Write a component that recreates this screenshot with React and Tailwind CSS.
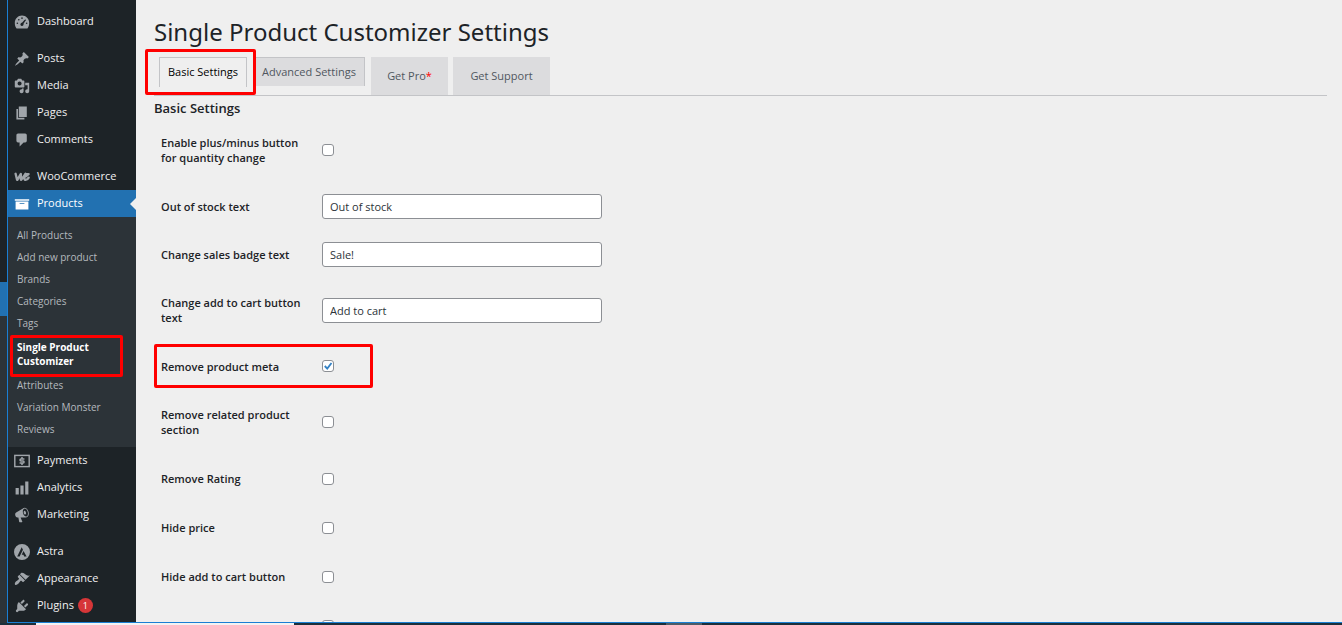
import { useState } from "react";
import clsx from "clsx";

function MenuIcon({ children }) {
  return (
    <svg viewBox="0 0 20 20" fill="currentColor" aria-hidden="true" className="size-4 shrink-0">
      {children}
    </svg>
  );
}

const icons = {
  dashboard: (
    <path
      fillRule="evenodd"
      d="M3.2 18h13.6C18.3 16.300 19 13.8 19 11.200c0-5-4-9.200-9-9.200s-9 4.200-9 9.200c0 2.600.7 5.100 2.200 6.800zM9 5.200a1 1 0 1 0 2 0 1 1 0 1 0-2 0zM5 7.200a1 1 0 1 0 2 0 1 1 0 1 0-2 0zM13.100 7.600c.4-.5 1.300-.9 1.700-.5.4.4-.2 1.200-.7 1.600l-2.200 3.500c.4 1.500-.5 2.800-1.900 2.800-1.900 0-2.700-2.300-1.300-3.500.4-.3.8-.5 1.300-.5zM3.200 11.500a1 1 0 1 0 2 0 1 1 0 1 0-2 0zM14.800 11.500a1 1 0 1 0 2 0 1 1 0 1 0-2 0z"
    />
  ),
  posts: (
    <path d="M10.44 3.02l1.82-1.82 6.36 6.35-1.83 1.82c-1.05-.68-2.48-.57-3.41.36l-.75.75c-.92.93-1.04 2.35-.35 3.41l-1.83 1.82-2.41-2.41-2.8 2.79c-.42.42-3.38 2.71-3.8 2.29s1.86-3.39 2.28-3.81l2.79-2.79L4.1 9.36l1.83-1.82c1.05.69 2.48.57 3.4-.36l.75-.75c.93-.92 1.05-2.35.36-3.41z" />
  ),
  media: (
    <path d="M13 11V4c0-.55-.45-1-1-1h-1.67L9 1H5L3.67 3H2c-.55 0-1 .45-1 1v7c0 .55.45 1 1 1h10c.55 0 1-.45 1-1zM7 4.5c1.38 0 2.5 1.12 2.5 2.5S8.38 9.5 7 9.5 4.5 8.38 4.5 7 5.62 4.5 7 4.5zM14 6h5v10.5c0 1.38-1.12 2.5-2.5 2.5S14 17.88 14 16.5s1.12-2.5 2.5-2.5c.17 0 .34.02.5.05V9h-3V6zm-4 8.05V13h2v3.5c0 1.38-1.12 2.5-2.5 2.5S7 17.88 7 16.5 8.12 14 9.5 14c.17 0 .34.02.5.05z" />
  ),
  pages: <path d="M6 15V2h10v13H6zm-1 1h8v2H3V5h2v11z" />,
  comments: (
    <path d="M5 2h9c1.1 0 2 .9 2 2v7c0 1.1-.9 2-2 2h-2l-5 5v-5H5c-1.1 0-2-.9-2-2V4c0-1.1.9-2 2-2z" />
  ),
  woo: (
    <path
      d="M2 6L3.800 13.500H4.200L8.600 6.200V13.500H9L14.300 6C12.600 9.500 12.300 13.600 14.600 13.600C16.200 13.600 17.500 12.300 18.300 10.800M14.800 9.200L18.200 6.300H14.600"
      fill="none"
      stroke="currentColor"
      strokeWidth="2.900"
      strokeLinejoin="round"
      strokeLinecap="round"
    />
  ),
  products: <path d="M19 4v2H1V4h18zM2 7h16v10H2V7zm11 3V9H7v1h6z" />,
  payments: (
    <g fill="none" stroke="currentColor">
      <rect x="1" y="3" width="18" height="14" strokeWidth="1.800" />
      <path d="M13 7.500H8.700C7.100 7.500 7.100 10 8.700 10h2.600c1.700 0 1.700 2.500 0 2.500H7M10 5v2.500M10 12.500V15" strokeWidth="1.900" />
    </g>
  ),
  analytics: <path d="M18 18V2h-4v16h4zm-6 0V7H8v11h4zm-6 0v-8H2v8h4z" />,
  marketing: (
    <path d="M18.150 5.940c.46 1.620.38 3.220-.02 4.480-.42 1.280-1.260 2.180-2.300 2.480-.16.06-.26.06-.4.06-.06.02-.12.02-.18.02-.06.02-.14.02-.22.02h-6.800l2.220 5.500c.02.14-.06.26-.14.34-.08.1-.24.16-.34.16H6.950c-.1 0-.26-.06-.34-.16-.08-.08-.16-.2-.14-.34l-1-5.500H4.250l-.02-.02c-.5.06-1.080-.18-1.540-.62s-.88-1.080-1.060-1.880c-.24-.8-.2-1.560-.02-2.200.18-.62.58-1.080 1.060-1.300l.02-.02 9-5.400c.1-.06.18-.1.24-.16.06-.04.14-.08.24-.12.16-.08.28-.12.5-.18 1.040-.3 2.240.1 3.220.98s1.840 2.240 2.260 3.860zm-2.580 5.980h-.02c.4-.1.74-.34 1.040-.7.58-.7.86-1.760.86-3.040 0-.64-.1-1.300-.28-1.980-.34-1.360-1.020-2.500-1.780-3.240s-1.680-1.100-2.460-.88c-.82.22-1.400.96-1.700 2-.32 1.040-.28 2.360.06 3.720.38 1.360 1 2.500 1.800 3.240.78.74 1.620 1.100 2.480.88zm-2.540-7.080c.22-.04.42-.02.62.04.38.16.76.48 1.020 1s.42 1.200.42 1.780c0 .3-.04.56-.12.8-.18.48-.44.84-.86.94-.34.1-.8-.06-1.140-.4s-.64-.86-.78-1.500c-.18-.62-.12-1.240.02-1.720s.48-.84.82-.94z" />
  ),
  astra: (
    <path
      fillRule="evenodd"
      d="M10 0a10 10 0 1 0 0 20 10 10 0 0 0 0-20zM9.600 4.200L11.200 7.300L7 15.500H4zM11.900 8.600L15.800 15.500H12.700L11.800 13.400H9.600z"
    />
  ),
  appearance: (
    <path d="M14.480 11.060L7.410 3.990l1.500-1.500c.5-.56 2.300-.47 3.510.32 1.210.8 1.430 1.280 2.910 2.100 1.180.64 2.450 1.260 4.450.85zm-.71.71L6.700 4.700 4.930 6.470c-.39.39-.39 1.020 0 1.410l1.060 1.060c.39.39.39 1.030 0 1.420-.6.6-1.430 1.110-2.210 1.690-.35.26-.7.53-1.010.84C1.430 14.230.4 16.080 1.400 17.070c.99 1 2.840-.03 4.180-1.360.31-.31.58-.66.85-1.020.57-.78 1.080-1.610 1.690-2.210.39-.39 1.020-.39 1.410 0l1.060 1.060c.39.39 1.020.39 1.410 0z" />
  ),
  plugins: (
    <path d="M13.110 4.360L9.870 7.600 8 5.730l3.240-3.240c.35-.34 1.050-.2 1.560.32.52.51.66 1.210.31 1.550zm-8 1.770l.91-1.120 9.010 9.010-1.190.84c-.71.71-2.630 1.160-3.820 1.160H6.140L4.900 17.260c-.59.59-1.540.59-2.120 0-.59-.58-.59-1.530 0-2.120l1.240-1.240v-3.880c0-1.130.4-3.190 1.090-3.890zm7.260 3.970l3.240-3.240c.34-.35 1.040-.21 1.550.31.52.51.66 1.210.31 1.550l-3.240 3.250z" />
  ),
};

const menuGroups = [
  [{ icon: "dashboard", label: "Dashboard" }],
  [
    { icon: "posts", label: "Posts" },
    { icon: "media", label: "Media" },
    { icon: "pages", label: "Pages" },
    { icon: "comments", label: "Comments" },
  ],
  [
    { icon: "woo", label: "WooCommerce" },
    {
      icon: "products",
      label: "Products",
      children: [
        "All Products",
        "Add new product",
        "Brands",
        "Categories",
        "Tags",
        "Single Product Customizer",
        "Attributes",
        "Variation Monster",
        "Reviews",
      ],
    },
    { icon: "payments", label: "Payments" },
    { icon: "analytics", label: "Analytics" },
    { icon: "marketing", label: "Marketing" },
  ],
  [
    { icon: "astra", label: "Astra" },
    { icon: "appearance", label: "Appearance" },
    { icon: "plugins", label: "Plugins", badge: 1 },
  ],
];

const settings = [
  { id: "plus_minus", label: "Enable plus/minus button for quantity change", tall: true, value: false },
  { id: "stock_text", label: "Out of stock text", value: "Out of stock" },
  { id: "sale_text", label: "Change sales badge text", value: "Sale!" },
  { id: "cart_text", label: "Change add to cart button text", tall: true, value: "Add to cart" },
  { id: "remove_meta", label: "Remove product meta", value: true, marked: true },
  { id: "remove_related", label: "Remove related product section", tall: true, value: false },
  { id: "remove_rating", label: "Remove Rating", value: false },
  { id: "hide_price", label: "Hide price", value: false },
  { id: "hide_cart", label: "Hide add to cart button", value: false },
  { id: "hide_sku", label: "", value: false },
];

function rowHeight(setting) {
  if (setting.tall) return "h-16";
  return typeof setting.value === "string" || setting.marked ? "h-12" : "h-[49px]";
}

function Highlight({ className }) {
  return (
    <span className={clsx("pointer-events-none absolute z-10 rounded-xs border-3 border-[#ff0000]", className)} />
  );
}

function SubMenu({ items }) {
  return (
    <ul className="bg-[#2c3338] py-[7px]">
      {items.map((item) => {
        const current = item === "Single Product Customizer";
        return (
          <li key={item} className="relative">
            <a
              href="#"
              className={clsx(
                "block pr-6 pl-[9px] text-[10px] leading-[14px]",
                current ? "py-1.5 font-bold text-white" : "py-1 text-[#b4b9be]"
              )}
            >
              {item}
            </a>
            {current && <Highlight className="top-px left-0.5 h-[42px] w-[113px]" />}
          </li>
        );
      })}
    </ul>
  );
}

function Sidebar() {
  return (
    <nav className="flex w-32 shrink-0 flex-col gap-2.5 overflow-hidden bg-[#1d2327] pt-2">
      {menuGroups.map((group, i) => (
        <ul key={i}>
          {group.map((item) => (
            <li key={item.label}>
              <a
                href="#"
                className={clsx(
                  "relative flex h-[27px] items-center pl-1.5 text-[11px]",
                  item.children ? "bg-[#2271b1] text-white" : "text-[#f0f0f1]"
                )}
              >
                <span className={clsx("mr-[7px]", item.children ? "text-white" : "text-[#a0a5aa]")}>
                  <MenuIcon>{icons[item.icon]}</MenuIcon>
                </span>
                {item.label}
                {item.badge && (
                  <span className="ml-1 flex size-[15px] items-center justify-center rounded-full bg-[#d63638] text-[9px] text-white">
                    {item.badge}
                  </span>
                )}
                {item.children && (
                  <span className="absolute right-0 border-y-6 border-r-6 border-y-transparent border-r-[#efefef]" />
                )}
              </a>
              {item.children && <SubMenu items={item.children} />}
            </li>
          ))}
        </ul>
      ))}
    </nav>
  );
}

function Tabs() {
  return (
    <div className="relative mr-[15px] ml-[18px] flex h-[39px] items-start border-b border-[#c3c4c7] pl-[5px] text-[11px] font-medium text-[#50575e]">
      <button type="button" className="h-[30px] w-[88px] border border-b-0 border-[#c3c4c7] text-black">
        Basic Settings
      </button>
      <button type="button" className="ml-1.5 h-[29px] w-28 border border-b-0 border-[#c3c4c7] bg-[#dcdcde]">
        Advanced Settings
      </button>
      <button type="button" className="ml-1.5 h-[38px] w-[77px] bg-[#dcdcde]">
        Get Pro<span className="text-[#ff0000]">*</span>
      </button>
      <button type="button" className="ml-[5px] h-[38px] w-[97px] bg-[#dcdcde]">
        Get Support
      </button>
      <Highlight className="-top-2 -left-[9px] h-[46px] w-[111px]" />
    </div>
  );
}

function Field({ id, value, onChange }) {
  if (typeof value === "string") {
    return (
      <input
        id={id}
        type="text"
        value={value}
        onChange={(e) => onChange(e.target.value)}
        className="block h-[25px] w-[280px] rounded-[3px] border border-[#8c8f94] bg-white px-[7px] text-[11px] text-[#2c3338]"
      />
    );
  }
  return (
    <span className="relative block size-3">
      <input
        id={id}
        type="checkbox"
        checked={value}
        onChange={(e) => onChange(e.target.checked)}
        className="block size-3 appearance-none rounded-[3px] border border-[#8c8f94] bg-white"
      />
      {value && (
        <svg viewBox="0 0 13 13" className="pointer-events-none absolute inset-0" aria-hidden="true">
          <path d="M3 6.500L5.700 9.300L10.300 3.300" fill="none" stroke="#3582c4" strokeWidth="2" />
        </svg>
      )}
    </span>
  );
}

function SettingsTable() {
  const [values, setValues] = useState(() =>
    Object.fromEntries(settings.map((s) => [s.id, s.value]))
  );

  return (
    <table className="text-[11px]">
      <tbody>
        {settings.map((s) => (
          <tr key={s.id} className={rowHeight(s)}>
            <th scope="row" className="relative w-[168px] pr-4 pl-[7px] text-left leading-[15px] font-semibold text-[#1d2327]">
              <label htmlFor={s.id}>{s.label}</label>
              {s.marked && <Highlight className="top-0.5 left-0 h-11 w-[219px]" />}
            </th>
            <td className="p-0">
              <Field
                id={s.id}
                value={values[s.id]}
                onChange={(value) => setValues((prev) => ({ ...prev, [s.id]: value }))}
              />
            </td>
          </tr>
        ))}
      </tbody>
    </table>
  );
}

function App() {
  return (
    <div className="flex h-screen flex-col overflow-hidden bg-[#efefef] font-['Open_Sans','Noto_Sans',sans-serif]">
      <div className="flex min-h-0 flex-1">
        {/* edge of the window behind */}
        <div className="flex w-[7px] shrink-0 flex-col">
          <div className="h-[282px] bg-[#1d2327]" />
          <div className="h-[34px] bg-[#2271b1]" />
          <div className="flex-1 bg-[#2c3338]" />
        </div>
        <div className="flex min-w-0 flex-1 border-b border-l border-[#1a7fd4]">
          <Sidebar />
          <main className="min-w-0 flex-1 overflow-hidden">
            <h1 className="mt-4 mb-[9px] ml-[18px] font-['Noto_Sans',sans-serif] text-[24px] leading-8 text-[#1d2327]">
              Single Product Customizer Settings
            </h1>
            <Tabs />
            <section className="ml-[18px]">
              <h2 className="pt-0.5 text-[13px] leading-5 font-semibold text-[#1d2327]">
                Basic Settings
              </h2>
              <SettingsTable />
            </section>
          </main>
        </div>
      </div>
      <div className="flex h-0.5 shrink-0 bg-[#1c2f3a]">
        <div className="ml-9 w-[258px] bg-[#f3f3f3]" />
        <div className="ml-[372px] w-9 bg-[#4d5b66]" />
      </div>
    </div>
  );
}

export default App;
